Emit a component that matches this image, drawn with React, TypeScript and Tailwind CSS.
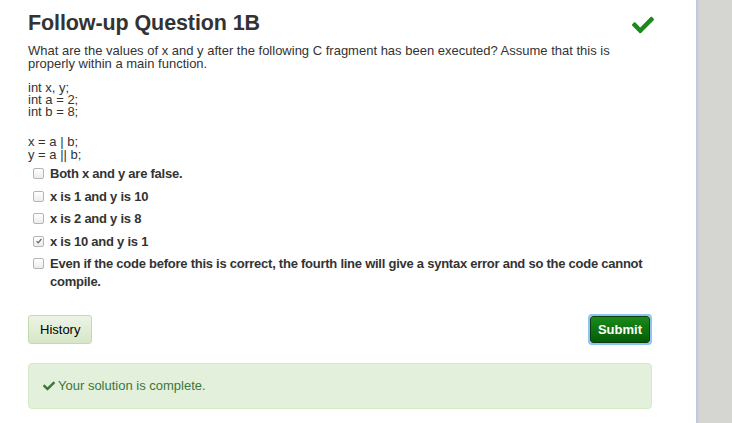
import { FaCheck } from "react-icons/fa";

const options = [
  { label: "Both x and y are false.", checked: false },
  { label: "x is 1 and y is 10", checked: false },
  { label: "x is 2 and y is 8", checked: false },
  { label: "x is 10 and y is 1", checked: true },
  {
    label:
      "Even if the code before this is correct, the fourth line will give a syntax error and so the code cannot compile.",
    checked: false,
  },
];

function Box({ checked }: { checked: boolean }) {
  return (
    <span className="mt-[3px] flex size-[11px] shrink-0 items-center justify-center rounded-[2px] border border-[#b4b4b4] bg-gradient-to-b from-white to-[#ececec]">
      {checked && (
        <svg viewBox="0 0 10 10" className="size-[8px]">
          <path d="M2 5.2 L4 7.3 L8 2.5" fill="none" stroke="#666" strokeWidth="1.6" />
        </svg>
      )}
    </span>
  );
}

export default function App() {
  return (
    <div className="flex h-[423px] w-[732px] bg-[#d5d5d1] font-['Liberation_Sans',Arial,sans-serif] text-[#333]">
      <div className="w-[696px] shrink-0 bg-white pl-[28px] pr-[44px]">
        <div className="flex items-start justify-between pt-[11px]">
          <h3 className="text-[21.5px] font-bold leading-[24px] tracking-[-0.1px]">Follow-up Question 1B</h3>
          <FaCheck className="mr-[-2px] mt-[3px] size-[22px] text-[#1a8a1a]" />
        </div>
        <p className="mt-[8px] text-[13px] leading-[13px]">
          What are the values of x and y after the following C fragment has been executed? Assume that this is
          properly within a main function.
        </p>
        <div className="mt-[12px] text-[13px] leading-[12px]">
          <div>int x, y;</div>
          <div>int a = 2;</div>
          <div>int b = 8;</div>
          <div className="h-[17px]" />
          <div className="leading-[13px]">x = a | b;</div>
          <div className="leading-[13px]">y = a || b;</div>
        </div>
        <ul className="mt-[4px] flex flex-col gap-[4.5px] pl-[5px]">
          {options.map((o) => (
            <li key={o.label} className="flex gap-[6px] text-[13px] font-bold leading-[18px] tracking-[-0.25px]">
              <Box checked={o.checked} />
              <span>{o.label}</span>
            </li>
          ))}
        </ul>
        <div className="mt-[23px] flex items-center justify-between">
          <button className="h-[29px] rounded-[3px] border border-[#c5d9b0] bg-gradient-to-b from-[#edf4e6] to-[#d6e6c7] px-[11px] text-[13px] text-black">
            History
          </button>
          <div className="rounded-[4px] p-[2px] ring-[2px] ring-[#8cc4f4] ring-inset">
            <button className="h-[27px] rounded-[3px] border border-[#0b3e0b] bg-gradient-to-b from-[#1a8b1a] to-[#065c06] px-[7px] text-[13px] font-bold text-white">
              Submit
            </button>
          </div>
        </div>
        <div className="mt-[18px] flex h-[46px] items-center gap-[3px] rounded-[4px] border border-[#d6e9c6] bg-[#e2f0dc] pl-[14px] text-[13px] text-[#3c763d]">
          <FaCheck className="size-[12px]" />
          <span>Your solution is complete.</span>
        </div>
      </div>
      <div className="w-[3px] bg-gradient-to-r from-[#b9c6da] to-[#d0d2d2]" />
      <div className="flex-1" />
    </div>
  );
}
